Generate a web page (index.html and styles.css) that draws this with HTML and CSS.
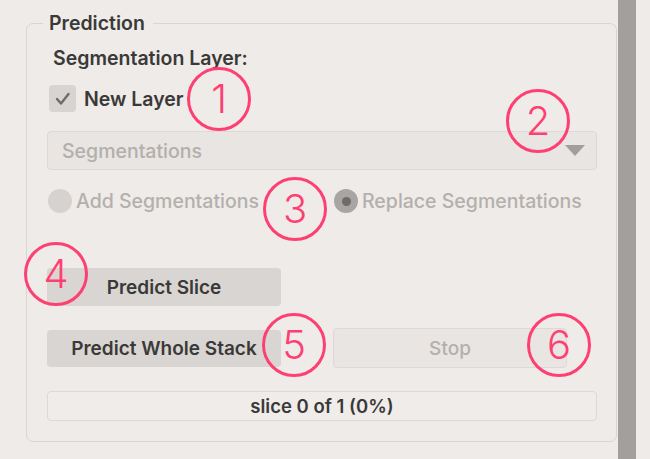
FILE: index.html
```html
<!DOCTYPE html>
<html>
<head>
<meta charset="utf-8">
<link rel="stylesheet" href="styles.css">
</head>
<body>
<div class="page">
  <main class="panel">
    <fieldset class="group">
      <legend class="group-title">Prediction</legend>
      <div class="section-label">Segmentation Layer:</div>
      <div class="check-row">
        <span class="checkbox">
          <svg width="27" height="27" viewBox="0 0 27 27"><polyline points="8,14 12,18.5 19.5,9" fill="none" stroke="#6e6b69" stroke-width="2.4" stroke-linecap="round" stroke-linejoin="round"/></svg>
        </span>
        <span class="check-text">New Layer</span>
      </div>
      <div class="dropdown">
        <span class="dropdown-text">Segmentations</span>
        <svg class="dropdown-arrow" width="20" height="11" viewBox="0 0 20 11"><polygon points="0,0 20,0 10,11" fill="#a29e9b"/></svg>
      </div>
      <div class="radio-row">
        <div class="radio-item">
          <span class="radio"></span>
          <span class="radio-text">Add Segmentations</span>
        </div>
        <div class="radio-item">
          <span class="radio radio-on"><span class="radio-dot"></span></span>
          <span class="radio-text">Replace Segmentations</span>
        </div>
      </div>
      <div class="button-grid">
        <button class="btn btn-slice">Predict Slice</button>
        <span></span>
        <button class="btn btn-stack">Predict Whole Stack</button>
        <button class="btn btn-stop" disabled>Stop</button>
      </div>
      <div class="progress">slice 0 of 1 (0%)</div>
    </fieldset>
    <div class="marker m1">1</div>
    <div class="marker m2">2</div>
    <div class="marker m3">3</div>
    <div class="marker m4">4</div>
    <div class="marker m5">5</div>
    <div class="marker m6">6</div>
  </main>
  <div class="scrollbar"></div>
  <div class="rest"></div>
</div>
</body>
</html>
```

FILE: styles.css
```css
* { box-sizing: border-box; }
html, body { margin: 0; padding: 0; }
body {
  background: #eeebe8;
  font-family: "Inter", "Liberation Sans", sans-serif;
  color: #3b3938;
}
.page {
  display: flex;
  width: 650px;
  height: 459px;
  overflow: hidden;
}
.panel {
  position: relative;
  width: 618px;
  flex: none;
}
.scrollbar {
  width: 18px;
  flex: none;
  background: #a39f9c;
}
.rest {
  flex: 1;
  background: #eeebe8;
}
.group {
  margin: 13px 0 0 26px;
  width: 591px;
  height: 429px;
  border: 1px solid #d8d5d2;
  border-radius: 7px;
  padding: 0 19px 0 20px;
  min-inline-size: 0;
  display: flex;
  flex-direction: column;
}
.group-title {
  font-size: 19.5px;
  line-height: 20px;
  font-weight: 600;
  padding: 0 8px 0 6px;
  margin-left: -4px;
  color: #3b3938;
}
.section-label {
  margin: 14px 0 0 6px;
  font-size: 19.5px;
  line-height: 22px;
  font-weight: 600;
}
.check-row {
  display: flex;
  align-items: center;
  margin: 16px 0 0 2px;
  gap: 8px;
}
.checkbox {
  width: 27px;
  height: 27px;
  border-radius: 4px;
  background: #d8d4d1;
  display: flex;
}
.check-text {
  font-size: 19.5px;
  line-height: 24px;
  font-weight: 600;
}
.dropdown {
  margin-top: 19px;
  height: 39px;
  border: 1px solid #dcd9d6;
  border-radius: 4px;
  background: #e8e5e2;
  display: flex;
  align-items: center;
  justify-content: space-between;
  padding: 0 11px 0 14px;
}
.dropdown-text {
  font-size: 19.5px;
  line-height: 24px;
  font-weight: 500;
  color: #b2afac;
}
.radio-row {
  margin-top: 19px;
  display: grid;
  grid-template-columns: 286px 1fr;
  padding-left: 1px;
}
.radio-item {
  display: flex;
  align-items: center;
  gap: 4px;
}
.radio {
  width: 24px;
  height: 24px;
  border-radius: 50%;
  background: #d6d2cf;
  display: flex;
  align-items: center;
  justify-content: center;
}
.radio-on { background: #a9a5a2; }
.radio-dot {
  width: 9px;
  height: 9px;
  border-radius: 50%;
  background: #6e6b69;
}
.radio-text {
  font-size: 19.5px;
  line-height: 24px;
  font-weight: 500;
  color: #b3b0ad;
}
.button-grid {
  margin-top: 55px;
  display: grid;
  grid-template-columns: 234px 234px;
  grid-template-rows: 38px 40px;
  column-gap: 52px;
  row-gap: 22px;
  align-items: center;
}
.btn {
  font-family: "Inter", "Liberation Sans", sans-serif;
  font-size: 19px;
  font-weight: 600;
  color: #3b3938;
  border: 0;
  border-radius: 4px;
  background: #d9d5d2;
  padding: 0;
}
.btn-slice { height: 38px; }
.btn-stack { height: 37px; }
.btn-stop {
  height: 40px;
  background: #e8e5e2;
  border: 1px solid #dcd9d6;
  color: #b3b0ad;
  font-weight: 500;
}
.progress {
  margin-top: 23px;
  height: 30px;
  border: 1px solid #dcd9d6;
  border-radius: 4px;
  background: #efecea;
  display: flex;
  align-items: center;
  justify-content: center;
  font-size: 18.5px;
  font-weight: 600;
}
.marker {
  position: absolute;
  width: 64px;
  height: 64px;
  margin: -32px 0 0 -32px;
  border: 3px solid #fe3f72;
  border-radius: 50%;
  display: flex;
  align-items: center;
  justify-content: center;
  color: #fe3f72;
  font-size: 40px;
  font-weight: 300;
  line-height: 1;
}
.m1 { left: 219px; top: 99px; }
.m2 { left: 538px; top: 121px; }
.m3 { left: 295px; top: 209px; }
.m4 { left: 56px; top: 274px; }
.m5 { left: 294px; top: 345px; }
.m6 { left: 559px; top: 345px; }
```
